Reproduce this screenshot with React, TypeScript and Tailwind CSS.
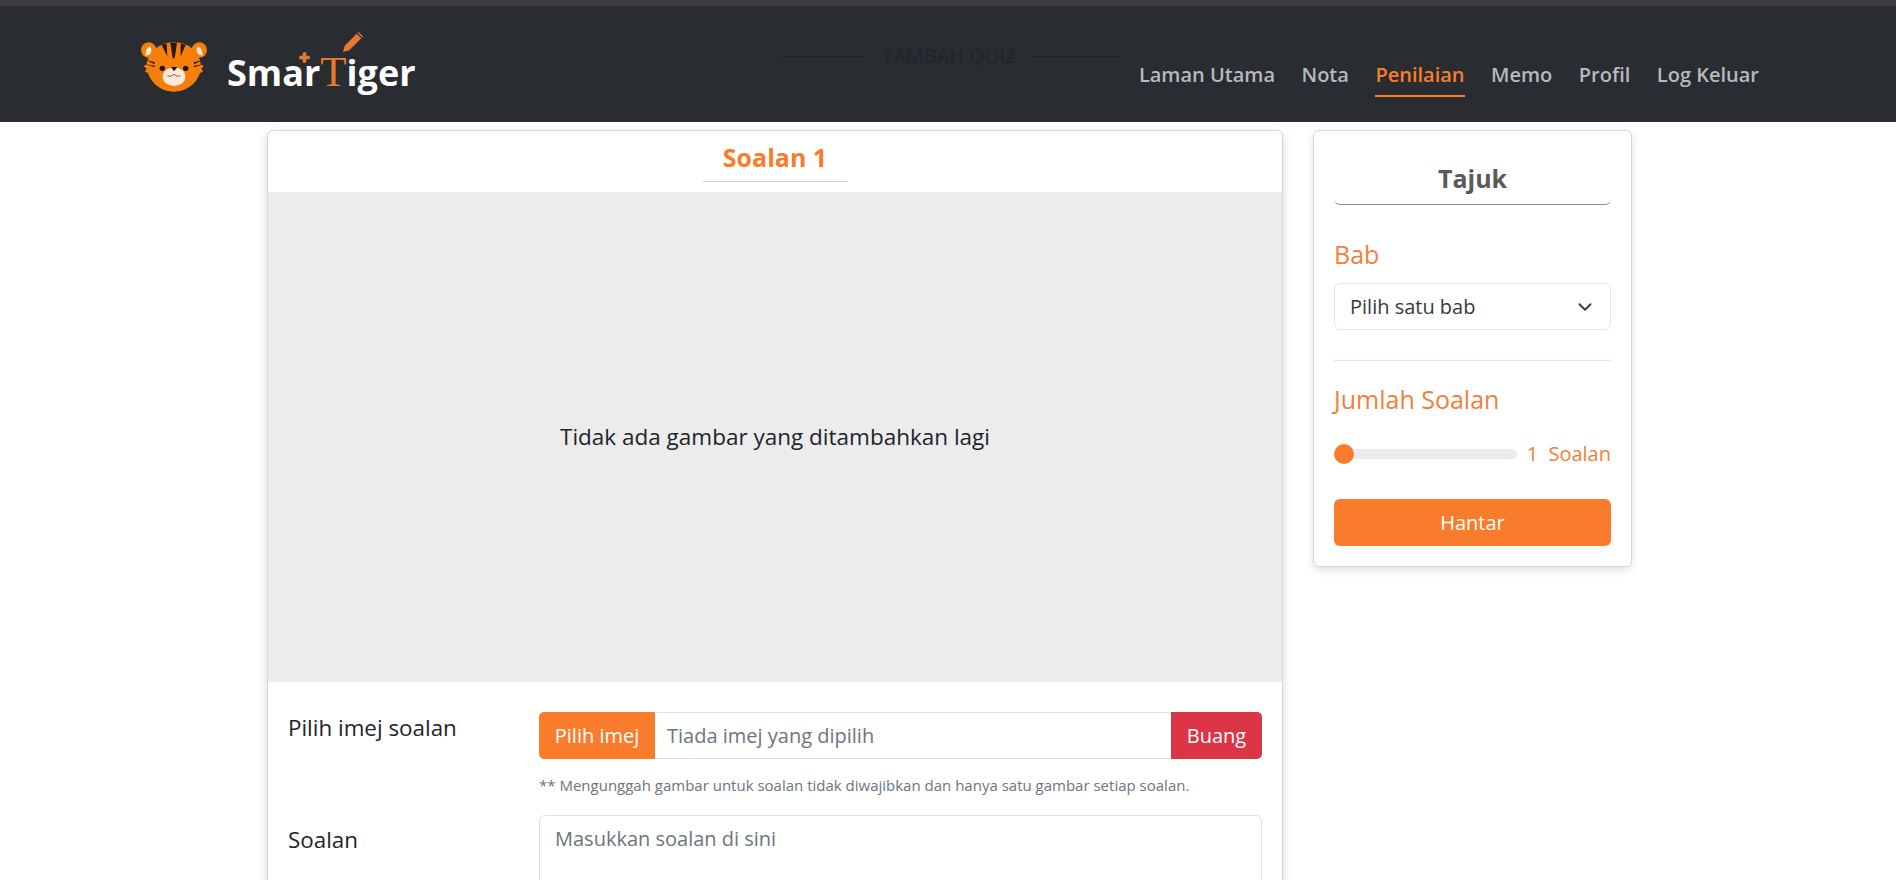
import { ChevronDown } from "lucide-react"

const sans = "font-['Open_Sans',sans-serif]"

function TigerLogo() {
    return (
        <svg viewBox="33 52 198 148" className="w-[66px] h-[50px] shrink-0 mt-[6px]">
            <circle cx="56" cy="75" r="23" fill="#f57f0a" />
            <circle cx="208" cy="75" r="23" fill="#f57f0a" />
            <path d="M46 92 Q46 72 60 64 Q68 74 60 88 Z" fill="#ffe9d9" />
            <path d="M218 92 Q218 72 204 64 Q196 74 204 88 Z" fill="#ffe9d9" />
            <path d="M132 52 C180 52 210 85 212 118 L222 124 L214 130 L219 140 L210 144 C198 180 165 200 132 200 C98 200 66 180 54 144 L45 140 L50 130 L40 124 L50 118 C54 85 84 52 132 52 Z" fill="#f57f0a" />
            <path d="M95 60 L110 55 L112 94 Z M121 53 L141 53 L134 100 L128 100 Z M152 55 L167 60 L152 94 Z" fill="#2a1608" />
            <path d="M46 104 L74 112 L74 118 Z M44 117 L74 122 L74 127 Z M220 104 L192 112 L192 118 Z M222 117 L192 122 L192 127 Z" fill="#2a1608" />
            <ellipse cx="132" cy="155" rx="34" ry="28" fill="#ffe9d9" />
            <circle cx="97" cy="130" r="8" fill="#1c1008" />
            <circle cx="167" cy="130" r="8" fill="#1c1008" />
            <path d="M123 126 L142 126 L132 139 Z" fill="#1c1008" />
            <path d="M112 152 Q122 158 132 148 Q142 158 152 152" fill="none" stroke="#3a2414" strokeWidth="2" />
        </svg>
    )
}

function Brand() {
    return (
        <div className="relative ml-[20px] mt-[14px] leading-none">
            <span className={`${sans} text-[36px] font-bold text-white leading-none`}>
                Smar
                <span className="font-['Liberation_Serif',serif] font-normal text-[#e87a30] text-[43px]">T</span>
                iger
            </span>
            <svg viewBox="0 0 24 24" className="absolute left-[115px] -top-[19px] w-[22px] h-[22px]">
                <path d="M1 23 L3 16 L16 3 L21 8 L8 21 Z" fill="#e87a30" />
                <path d="M18 1 L23 6 L22 7 L17 2 Z" fill="#e87a30" />
            </svg>
            <svg viewBox="0 0 12 12" className="absolute left-[72px] top-[2px] w-[11px] h-[11px]">
                <path d="M4 1 Q6 -1 8 1 V4 H11 Q13 6 11 8 H8 V11 Q6 13 4 11 V8 H1 Q-1 6 1 4 H4 Z" fill="#e87a30" />
            </svg>
        </div>
    )
}

function Navbar() {
    const links = ["Laman Utama", "Nota", "Penilaian", "Memo", "Profil", "Log Keluar"]
    return (
        <nav className="relative h-[116px] bg-[#292c31] flex items-center pl-[141px] pr-[137px]">
            <TigerLogo />
            <Brand />
            <div className="absolute left-[780px] top-[40px] flex items-center gap-[17px]">
                <div className="w-[85px] h-px bg-[#212529]"></div>
                <span className={`${sans} text-[20px] text-[#212529] leading-none`}>TAMBAH QUIZ</span>
                <div className="w-[88px] h-px bg-[#212529]"></div>
            </div>
            <ul className={`${sans} ml-auto mt-[29px] flex gap-[26.5px] text-[20px] leading-[30px] font-semibold`}>
                {links.map((l) => (
                    <li
                        key={l}
                        className={
                            l === "Penilaian"
                                ? "text-[#f97c2c] border-b-2 border-[#f97c2c] pb-[5px]"
                                : "text-[#b6babe] border-b-2 border-transparent pb-[5px]"
                        }
                    >
                        {l}
                    </li>
                ))}
            </ul>
        </nav>
    )
}

function QuestionCard() {
    return (
        <div className="w-[1016px] shrink-0 bg-white border border-[#d6d6d6] rounded-[6px] shadow-[0_4px_12px_rgba(0,0,0,0.15)] overflow-hidden">
            <div className="h-[61px] flex flex-col items-center">
                <h2 className="mt-[9px] text-[25px] leading-[34px] font-bold text-[#f97c2c]">Soalan 1</h2>
                <div className="w-[144px] h-px bg-[#cfcfcf] mt-[7px]"></div>
            </div>
            <div className="h-[490px] bg-[#ececec] flex items-center justify-center">
                <p className="text-[22.5px] text-[#212529]">Tidak ada gambar yang ditambahkan lagi</p>
            </div>
            <div className="px-[20px] pt-[29px] pb-[20px]">
                <div className="flex">
                    <label className="w-[251px] shrink-0 text-[22.4px] leading-[33px] text-[#212529]">Pilih imej soalan</label>
                    <div className="flex-1 pt-px">
                        <div className="h-[47px] flex text-[20px]">
                            <div className="w-[116px] bg-[#f97c2c] text-white rounded-l-[5px] flex items-center justify-center font-medium">Pilih imej</div>
                            <div className="flex-1 border-y border-[#dee2e6] flex items-center pl-[12px] text-[#6c757d]">Tiada imej yang dipilih</div>
                            <div className="w-[91px] bg-[#dc3545] text-white rounded-r-[5px] flex items-center justify-center">Buang</div>
                        </div>
                        <p className="mt-[16px] text-[15px] leading-[20px] text-[#6c757d]">
                            ** Mengunggah gambar untuk soalan tidak diwajibkan dan hanya satu gambar setiap soalan.
                        </p>
                    </div>
                </div>
                <div className="flex mt-[20px]">
                    <label className="w-[251px] shrink-0 pt-[8px] text-[22.4px] leading-[33px] text-[#212529]">Soalan</label>
                    <div className="flex-1 h-[140px] border border-[#dee2e6] rounded-[6px] px-[15px] py-[8px] text-[20px] leading-[30px] text-[#6c757d]">
                        Masukkan soalan di sini
                    </div>
                </div>
            </div>
        </div>
    )
}

function Sidebar() {
    return (
        <div className="w-[319px] h-[437px] shrink-0 bg-white border border-[#d6d6d6] rounded-[6px] shadow-[0_3px_8px_rgba(0,0,0,0.12)] px-[20px]">
            <div className="h-[74px] pt-[30px] text-center border-b border-[#8f8f8f] rounded-b-[6px]">
                <h3 className="text-[25px] leading-[34px] font-bold text-[#5a5a5a]">Tajuk</h3>
            </div>
            <div className="mt-[33px] text-[25px] leading-[33px] text-[#f0803c]">Bab</div>
            <div className="mt-[12px] h-[47px] border border-[#e3e5e8] rounded-[6px] flex items-center justify-between pl-[15px] pr-[14px] text-[20px] text-[#343a40]">
                Pilih satu bab
                <ChevronDown size={22} strokeWidth={2} className="text-[#343a40]" />
            </div>
            <div className="mt-[30px] h-px bg-[#f8dfd0]"></div>
            <div className="mt-[22px] text-[25px] leading-[33px] text-[#f0803c]">Jumlah Soalan</div>
            <div className="mt-[26px] flex items-center h-[24px]">
                <div className="relative w-[183px] h-[10px] rounded-full bg-[#e9ecef]">
                    <div className="absolute left-0 -top-[5px] w-[20px] h-[20px] rounded-full bg-[#f97c2c]"></div>
                </div>
                <span className="ml-auto text-[20px] text-[#f0803c] whitespace-pre">1  Soalan</span>
            </div>
            <div className="mt-[33px] h-[47px] rounded-[6px] bg-[#f97c2c] flex items-center justify-center text-[20px] font-medium text-white">
                Hantar
            </div>
        </div>
    )
}

export default function App() {
    return (
        <div className={`${sans} h-screen overflow-hidden bg-white`}>
            <div className="h-[6px] bg-[#3c3c3c]"></div>
            <Navbar />
            <main className="ml-[267px] mt-[8px] flex items-start gap-[30px]">
                <QuestionCard />
                <Sidebar />
            </main>
        </div>
    )
}
